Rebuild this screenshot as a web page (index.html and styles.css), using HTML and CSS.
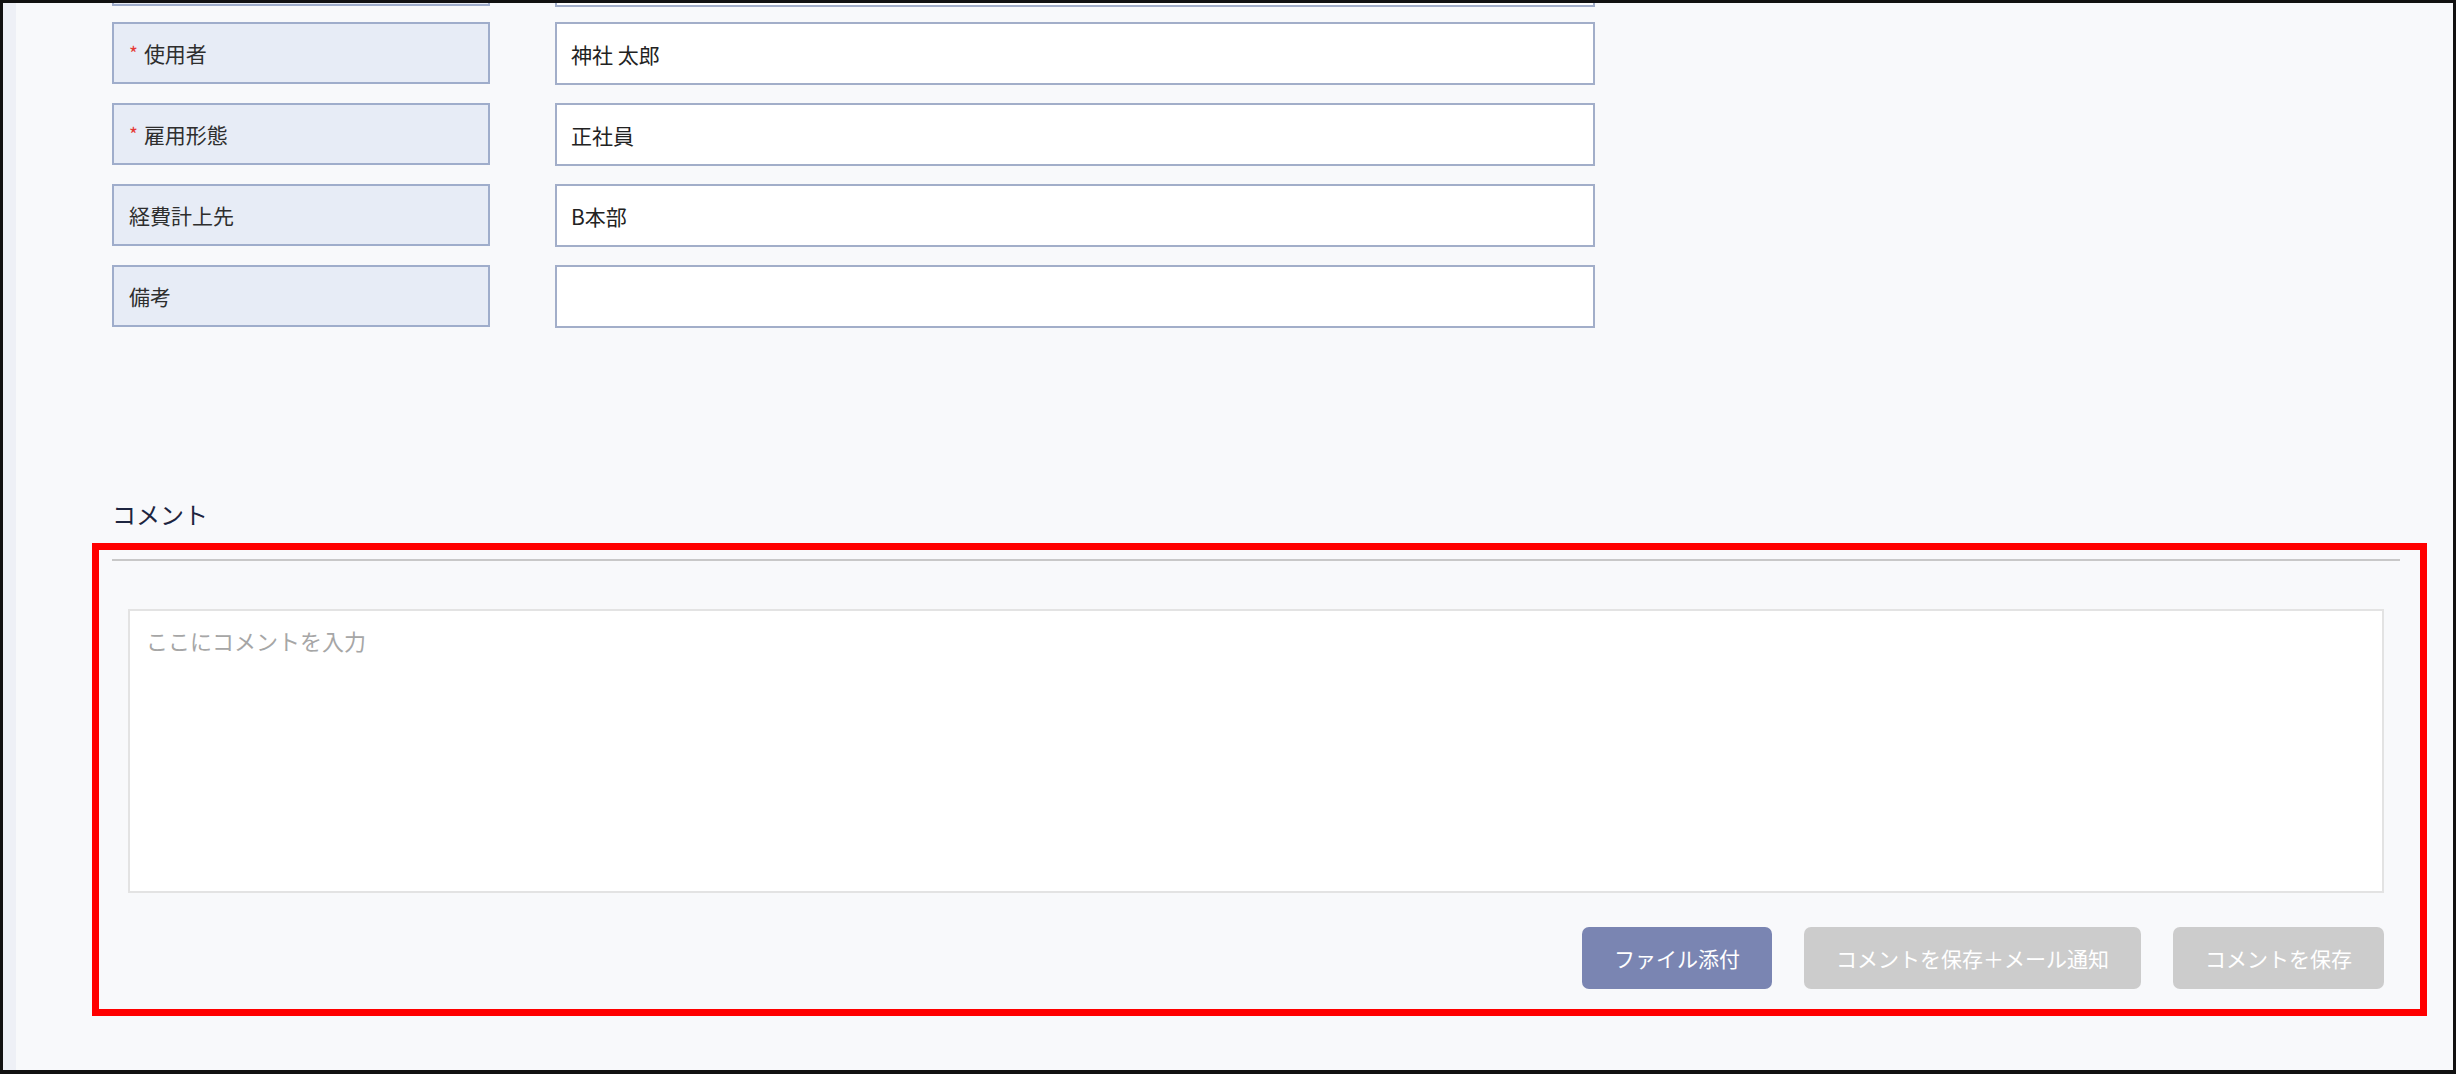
FILE: index.html
```html
<!DOCTYPE html>
<html lang="ja">
<head>
<meta charset="utf-8">
<title>コメント</title>
<link rel="stylesheet" href="styles.css">
</head>
<body>
<div class="frame">
  <div class="strip"></div>
  <main class="main">
    <div class="row row-prev">
      <div class="label"></div>
      <div class="field"></div>
    </div>
    <div class="row">
      <div class="label"><span class="req">*</span>使用者</div>
      <div class="field">神社 太郎</div>
    </div>
    <div class="row">
      <div class="label"><span class="req">*</span>雇用形態</div>
      <div class="field">正社員</div>
    </div>
    <div class="row">
      <div class="label">経費計上先</div>
      <div class="field">B本部</div>
    </div>
    <div class="row">
      <div class="label">備考</div>
      <div class="field"></div>
    </div>

    <section class="comment">
      <h2 class="comment-title">コメント</h2>
      <div class="comment-panel">
        <textarea class="comment-input" placeholder="ここにコメントを入力"></textarea>
        <div class="actions">
          <button class="btn btn-primary" type="button">ファイル添付</button>
          <button class="btn btn-disabled" type="button">コメントを保存＋メール通知</button>
          <button class="btn btn-disabled" type="button">コメントを保存</button>
        </div>
        <div class="highlight"></div>
      </div>
    </section>
  </main>
</div>
</body>
</html>
```
FILE: styles.css
```css
* { box-sizing: border-box; }

html, body {
  margin: 0;
  padding: 0;
  width: 2456px;
  height: 1074px;
  overflow: hidden;
  background: #f8f9fb;
  font-family: "Noto Sans CJK JP", "Noto Sans", sans-serif;
}

.frame {
  width: 2456px;
  height: 1074px;
  border: 3px solid #111;
  border-bottom-width: 4px;
  display: flex;
  overflow: hidden;
}

.strip {
  width: 13px;
  flex: none;
  background: #eef0f6;
}

.main {
  flex: 1;
  background: #f8f9fb;
  padding: 0 53px 0 96px;
  display: flex;
  flex-direction: column;
}

.row {
  display: flex;
  gap: 65px;
  height: 62px;
  margin-bottom: 19px;
  flex: none;
}

.row-prev {
  margin-top: -59px;
  margin-bottom: 16px;
}

.label {
  width: 378px;
  height: 62px;
  background: #e7ecf6;
  border: 2px solid #9fadcb;
  display: flex;
  align-items: center;
  padding-left: 15px;
  font-size: 21px;
  color: #2e2e2e;
}

.req {
  color: #e53935;
  font-size: 19px;
  margin-right: 6px;
  position: relative;
  top: -1px;
}

.field {
  width: 1040px;
  height: 63px;
  background: #fff;
  border: 2px solid #a2aec9;
  display: flex;
  align-items: center;
  padding-left: 14px;
  font-size: 21px;
  color: #222;
}

.comment {
  margin-top: 152px;
}

.comment-title {
  margin: 0 0 29px 0;
  font-size: 24px;
  line-height: 32px;
  font-weight: 400;
  color: #1d2540;
}

.comment-panel {
  position: relative;
  border-top: 2px solid #c8c8c8;
  padding: 48px 16px 0;
}

.comment-input {
  display: block;
  width: 100%;
  height: 284px;
  background: #fff;
  border: 2px solid #e3e3e3;
  padding: 13px 16px;
  font-family: "Noto Sans CJK JP", "Noto Sans", sans-serif;
  font-size: 22px;
  line-height: 33px;
  color: #333;
  resize: none;
  outline: none;
}

.comment-input::placeholder {
  color: #a6a6a6;
}

.actions {
  display: flex;
  justify-content: flex-end;
  gap: 32px;
  margin-top: 34px;
}

.btn {
  height: 62px;
  border: none;
  border-radius: 7px;
  padding: 0 32px;
  font-family: "Noto Sans CJK JP", "Noto Sans", sans-serif;
  font-size: 21px;
  color: #fff;
}

.btn-primary { background: #7a85b2; }
.btn-disabled { background: #cccccc; }

.highlight {
  position: absolute;
  top: -18px;
  left: -20px;
  right: -27px;
  bottom: -27px;
  border: 7px solid #ff0000;
  pointer-events: none;
}
```
